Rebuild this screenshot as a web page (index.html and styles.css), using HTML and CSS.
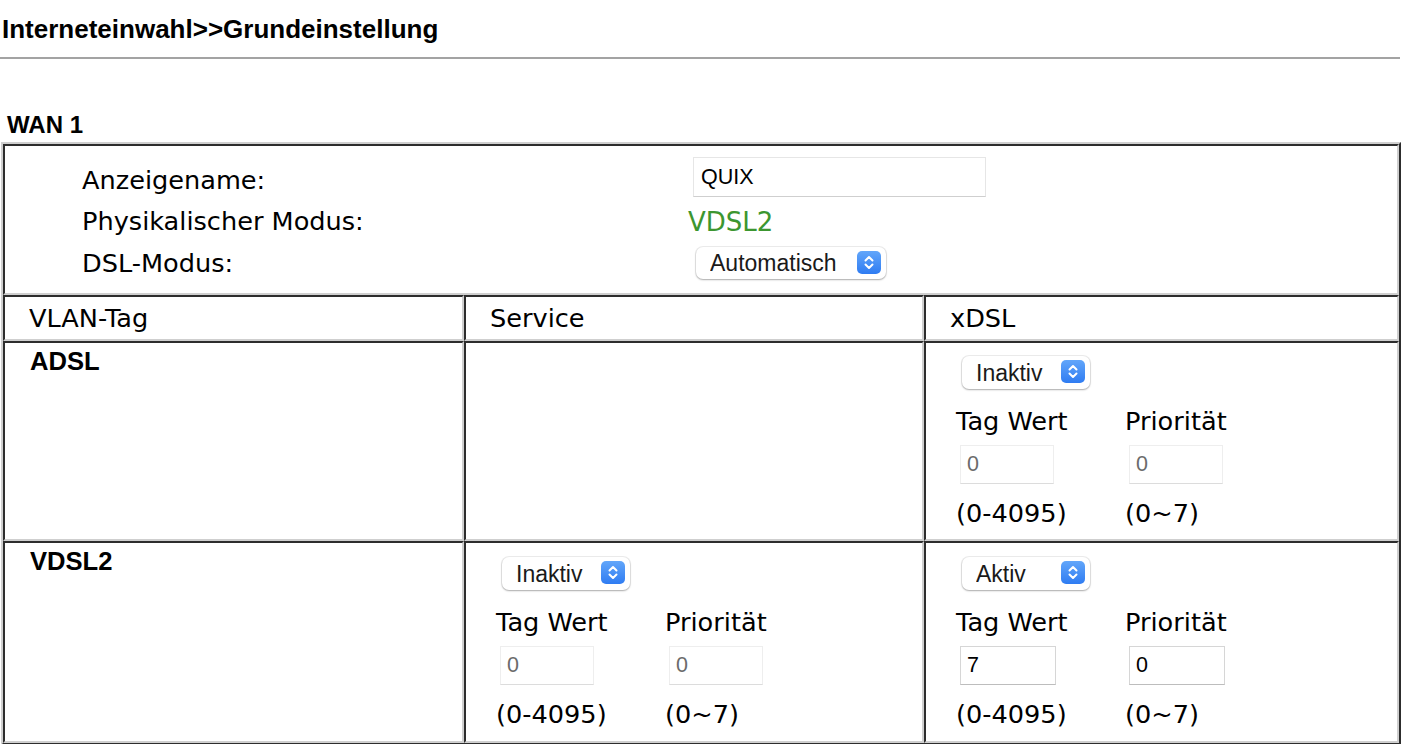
FILE: index.html
```html
<!DOCTYPE html>
<html lang="de">
<head>
<meta charset="utf-8">
<title>Interneteinwahl</title>
<link rel="stylesheet" href="styles.css">
</head>
<body>
<h1 class="title">Interneteinwahl&gt;&gt;Grundeinstellung</h1>
<hr class="rule">
<h2 class="wan">WAN 1</h2>
<table class="main">
  <colgroup><col class="c1"><col class="c2"><col class="c3"></colgroup>
  <tr>
    <td colspan="3" class="general">
      <div class="form">
        <div class="lbl">Anzeigename:</div>
        <div class="val"><input class="txt name" type="text" value="QUIX"></div>
        <div class="lbl">Physikalischer Modus:</div>
        <div class="val"><span class="green">VDSL2</span></div>
        <div class="lbl">DSL-Modus:</div>
        <div class="val">
          <span class="sel sel-wide"><select><option>Automatisch</option></select><svg class="step" width="24" height="23" viewBox="0 0 24 23"><defs><linearGradient id="g1" x1="0" y1="0" x2="0" y2="1"><stop offset="0" stop-color="#62a6fa"/><stop offset="1" stop-color="#2f7cf2"/></linearGradient></defs><rect width="24" height="23" rx="5" fill="url(#g1)"/><path d="M8.5 9.5 L12 6 L15.5 9.5 M8.5 13.5 L12 17 L15.5 13.5" fill="none" stroke="#fff" stroke-width="2" stroke-linecap="round" stroke-linejoin="round"/></svg></span>
        </div>
      </div>
    </td>
  </tr>
  <tr class="head">
    <td>VLAN-Tag</td>
    <td>Service</td>
    <td>xDSL</td>
  </tr>
  <tr class="r3">
    <td class="mode"><b>ADSL</b></td>
    <td></td>
    <td class="vlan">
      <span class="sel"><select><option>Inaktiv</option></select><svg class="step" width="24" height="23" viewBox="0 0 24 23"><rect width="24" height="23" rx="5" fill="url(#g1)"/><path d="M8.5 9.5 L12 6 L15.5 9.5 M8.5 13.5 L12 17 L15.5 13.5" fill="none" stroke="#fff" stroke-width="2" stroke-linecap="round" stroke-linejoin="round"/></svg></span>
      <div class="pair">
        <div class="cap">Tag Wert</div><div class="cap">Priorität</div>
        <div><input class="txt num off" type="text" value="0"></div><div><input class="txt num off" type="text" value="0"></div>
        <div class="range">(0-4095)</div><div class="range">(0~7)</div>
      </div>
    </td>
  </tr>
  <tr class="r4">
    <td class="mode"><b>VDSL2</b></td>
    <td class="vlan">
      <span class="sel"><select><option>Inaktiv</option></select><svg class="step" width="24" height="23" viewBox="0 0 24 23"><rect width="24" height="23" rx="5" fill="url(#g1)"/><path d="M8.5 9.5 L12 6 L15.5 9.5 M8.5 13.5 L12 17 L15.5 13.5" fill="none" stroke="#fff" stroke-width="2" stroke-linecap="round" stroke-linejoin="round"/></svg></span>
      <div class="pair">
        <div class="cap">Tag Wert</div><div class="cap">Priorität</div>
        <div><input class="txt num off" type="text" value="0"></div><div><input class="txt num off" type="text" value="0"></div>
        <div class="range">(0-4095)</div><div class="range">(0~7)</div>
      </div>
    </td>
    <td class="vlan">
      <span class="sel"><select><option>Aktiv</option></select><svg class="step" width="24" height="23" viewBox="0 0 24 23"><rect width="24" height="23" rx="5" fill="url(#g1)"/><path d="M8.5 9.5 L12 6 L15.5 9.5 M8.5 13.5 L12 17 L15.5 13.5" fill="none" stroke="#fff" stroke-width="2" stroke-linecap="round" stroke-linejoin="round"/></svg></span>
      <div class="pair">
        <div class="cap">Tag Wert</div><div class="cap">Priorität</div>
        <div><input class="txt num on" type="text" value="7"></div><div><input class="txt num on" type="text" value="0"></div>
        <div class="range">(0-4095)</div><div class="range">(0~7)</div>
      </div>
    </td>
  </tr>
</table>
</body>
</html>
```
FILE: styles.css
```css
html, body {
  margin: 0;
  padding: 0;
  background: #fff;
  color: #000;
}
body {
  font-family: "DejaVu Sans", Verdana, sans-serif;
  font-size: 25.6px;
  overflow: hidden;
}
.title {
  margin: 0;
  padding: 14px 0 0 2px;
  font: bold 26px/30px "Liberation Sans", Arial, sans-serif;
  color: #000;
}
.rule {
  margin: 13px 0 0 0;
  width: 1400px;
  height: 2px;
  border: none;
  background: #a3a3a3;
}
.wan {
  margin: 52px 0 0 7px;
  font: bold 24px/28px "Liberation Sans", Arial, sans-serif;
  color: #000;
}
.main {
  margin: 3px 0 0 1px;
  width: 1400px;
  table-layout: fixed;
  border-collapse: separate;
  border-spacing: 0;
  border-style: solid;
  border-width: 2px;
  border-color: #cfcfcf #2d2d2d #2d2d2d #cfcfcf;
}
.c1 { width: 461px; }
.c2 { width: 460px; }
.c3 { width: 475px; }
.main td {
  box-sizing: border-box;
  border-style: solid;
  border-width: 2px;
  border-color: #2d2d2d #cfcfcf #cfcfcf #2d2d2d;
  padding: 0;
  vertical-align: top;
}
.general .form {
  display: grid;
  grid-template-columns: 606px 1fr;
  grid-template-rows: 42px 41px 42px;
  padding: 13px 0 9px 77px;
  align-items: center;
}
.lbl { line-height: 30px; margin-top: -1px; }
.val { display: flex; align-items: center; }
.green {
  color: #3c9630;
  line-height: 30px;
  font-size: 26px;
}
.txt {
  box-sizing: border-box;
  font-family: "Liberation Sans", Arial, sans-serif;
  font-size: 21.5px;
  background: #fff;
  border: 1px solid #e6e6e6;
  border-bottom-color: #cfcfcf;
  border-radius: 0;
  outline: none;
  margin: 0;
}
.name {
  width: 293px;
  height: 40px;
  margin: -6px 0 0 5px;
  padding: 0 0 0 7px;
  color: #000;
}
.sel {
  position: relative;
  display: inline-block;
  width: 128px;
  height: 33px;
  margin-left: 6px;
  border-radius: 7px;
  background: #fff;
  box-shadow: 0 0 0 1px rgba(0,0,0,0.07), 0 1px 2px rgba(0,0,0,0.28);
}
.sel-wide {
  width: 190px;
  height: 32px;
  margin-left: 8px;
}
.sel select {
  -webkit-appearance: none;
  appearance: none;
  width: 100%;
  height: 100%;
  border: none;
  background: transparent;
  padding: 0 0 0 14px;
  font-family: "Liberation Sans", Arial, sans-serif;
  font-size: 23px;
  color: #1a1a1a;
  outline: none;
}
.sel .step {
  position: absolute;
  right: 5px;
  top: 4px;
}
.head td {
  height: 46px;
  line-height: 42px;
  padding-left: 24px;
  vertical-align: middle;
}
.r3 td { height: 200px; }
.r4 td { height: 202px; }
.mode {
  padding: 3px 0 0 25px !important;
  font: bold 25.6px/30px "Liberation Sans", Arial, sans-serif;
}
.vlan {
  padding: 13px 0 0 30px !important;
}
.r4 .vlan {
  padding-top: 14px !important;
}
.pair {
  display: grid;
  grid-template-columns: 169px 169px;
  margin-top: 17px;
}
.cap { line-height: 30px; }
.num {
  width: 94px;
  height: 39px;
  margin: 9px 0 0 4px;
  padding: 0 0 0 6px;
}
.num.off {
  color: #6b6b6b;
  border-color: #eeeeee;
  border-bottom-color: #dcdcdc;
}
.num.on {
  width: 96px;
  color: #000;
  border-color: #d6d6d6;
  border-bottom-color: #bdbdbd;
}
.range {
  line-height: 30px;
  margin-top: 14px;
}
```
